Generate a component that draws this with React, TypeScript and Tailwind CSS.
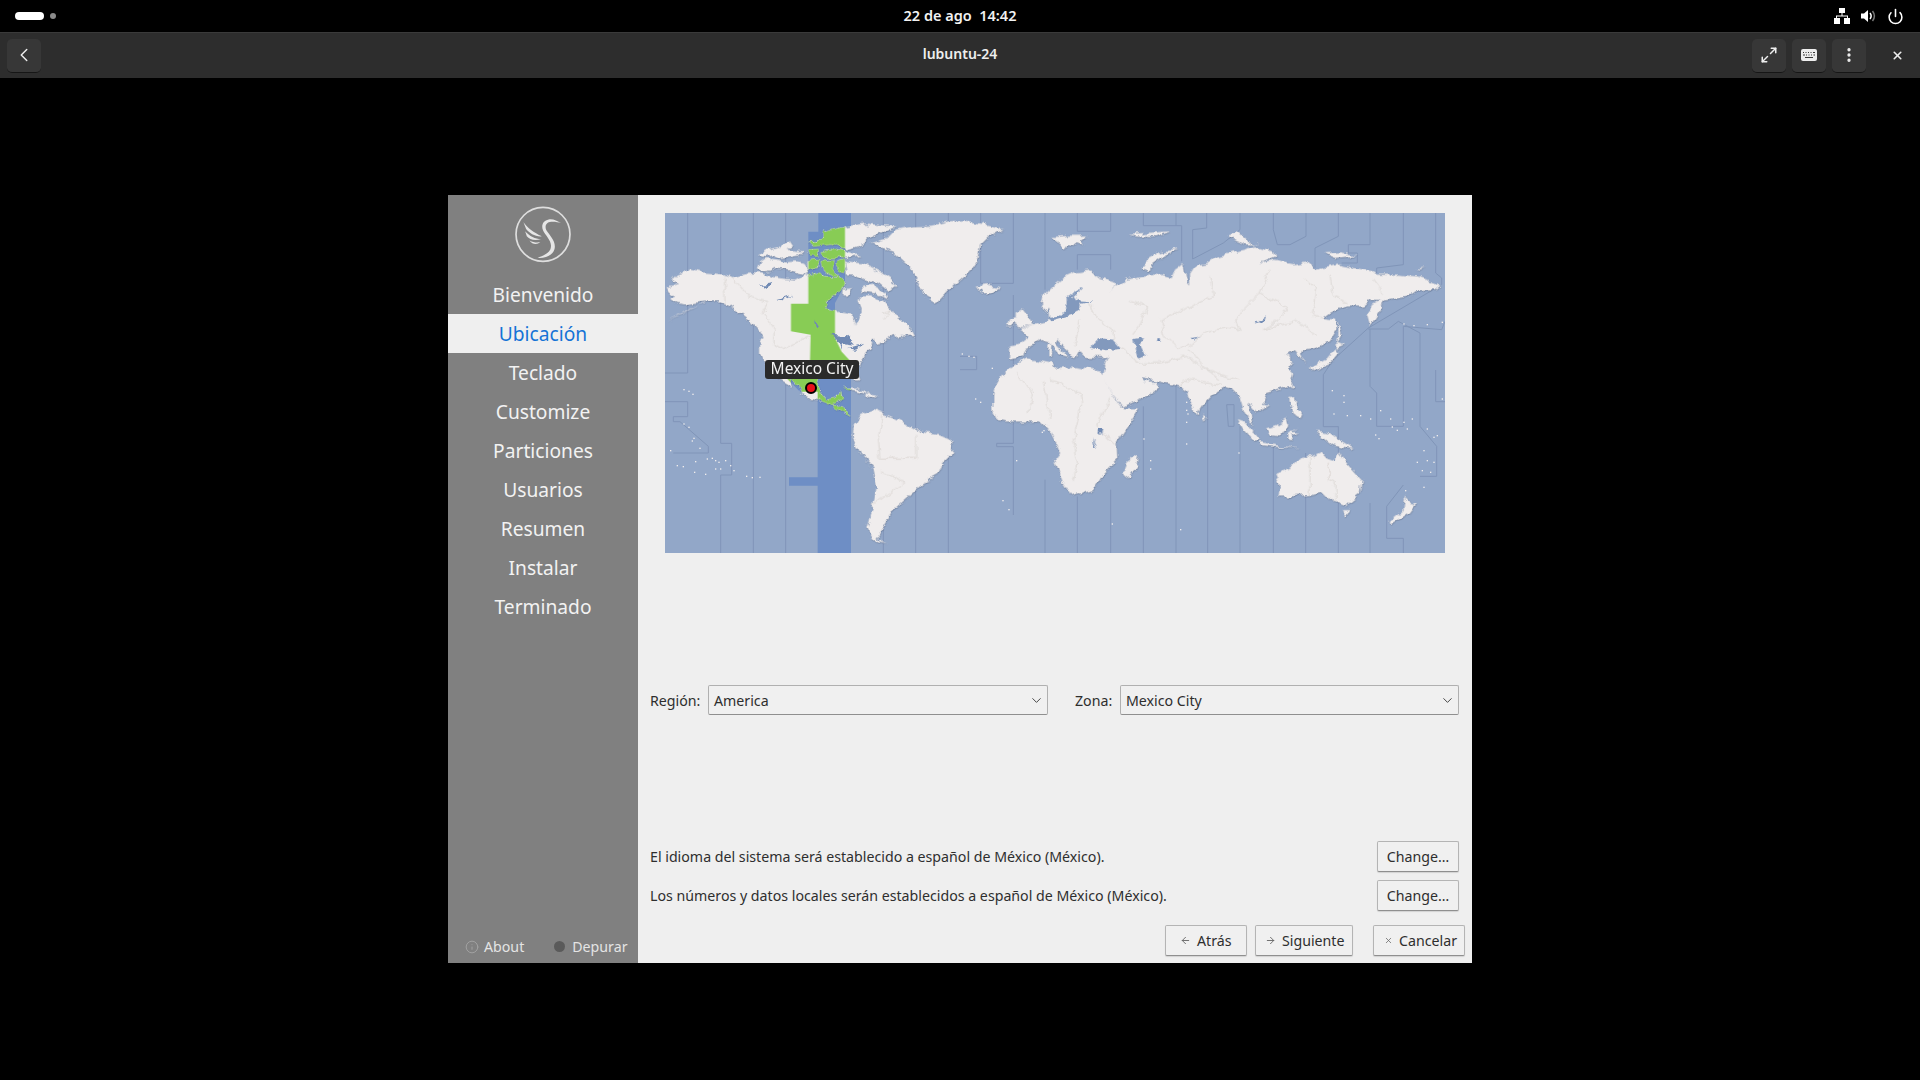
import React from "react";
import { ChevronLeft, ChevronDown, Maximize2, EllipsisVertical, X, Power, Info, ArrowLeft, ArrowRight } from "lucide-react";

const font = "font-['Noto_Sans','Liberation_Sans',sans-serif]";

// map outlines are traced from crops: 3 units = 1 screen pixel, origin at the map's top left
const AMERICAS = [
  "5,322 40,308 80,290 110,272 130,265 100,268 60,275 30,268 15,258 30,250 10,235 5,222 40,212 20,200 35,185 75,170 110,178 170,183 205,192 250,182 290,180 305,185 340,195 390,200 420,185 440,195 455,185 480,190 520,190 540,210 530,235 510,245 485,265 480,285 510,295 560,305 575,325 565,338 582,320 590,290 580,265 585,250 620,250 660,265 680,290 700,315 735,340 750,370 720,368 690,362 660,385 640,390 625,380 620,400 600,425 590,445 583,446 575,471 583,506 570,506 563,481 540,466 505,481 465,491 457,516 467,541 485,561 515,554 525,531 530,556 505,576 530,581 560,604 545,601 510,581 475,566 435,561 410,546 395,506 370,488 385,525 340,500 300,450 285,420 285,395 295,370 280,350 250,320 225,300 205,285 190,275 160,265 130,265",
  "275,165 285,145 300,135 340,140 360,148 395,145 420,150 430,165 425,185 395,180 370,172 330,165 310,175 285,172",
  "285,125 310,108 345,100 375,85 385,100 365,110 415,115 405,125 345,135 320,125 300,130",
  "470,60 540,40 600,32 695,40 650,60 625,70 590,95 545,110 500,95 470,85",
  "430,85 480,85 500,95 445,100",
  "430,110 460,108 460,130 435,130",
  "470,115 510,110 590,125 540,135 480,135",
  "430,145 465,140 460,165 430,165",
  "470,145 505,140 500,170 525,190 480,180",
  "510,150 540,140 540,180 525,175",
  "440,185 470,188 460,200",
  "540,145 590,150 640,175 695,215 670,235 640,210 600,200 570,185 545,185",
  "535,230 560,225 555,245 535,245",
  "585,225 620,215 660,240 670,260 630,240 590,235",
  "620,90 670,75 695,50 745,40 800,38 850,25 900,22 1015,46 975,71 945,101 935,146 915,176 865,216 815,271 775,246 755,196 730,156 685,116 635,101",
  "935,221 970,216 1005,226 980,241 950,241",
  // south america and the caribbean
  "565,646 585,606 625,588 655,601 705,621 765,656 820,666 865,686 860,721 835,746 820,786 775,811 725,856 685,891 665,926 635,976 665,991 625,981 607,946 625,876 635,816 625,766 585,721 563,676",
  "535,524 575,524 625,546 585,536",
  "600,544 635,548 625,556 603,554",
  "685,354 720,371 697,374",
];

const EURASIA = [
  "-90,396 -60,392 -35,372 -60,348 -15,335 15,325 30,315 28,290 20,300 5,270 10,250 40,220 70,195 110,178 150,172 180,195 235,212 205,235 240,210 255,200 285,195 350,185 395,195 405,170 430,150 440,200 450,215 450,185 470,155 500,150 530,130 590,115 650,100 700,115 705,130 655,150 700,140 760,150 800,145 830,170 890,155 1000,175 1010,185 1075,185 1130,190 1205,215 1185,232 1130,235 1110,250 1040,262 990,260 970,278 915,278 870,300 850,315 885,320 890,350 870,385 830,405 790,410 780,430 800,450 785,440 765,415 735,425 760,445 750,470 760,481 750,521 680,541 670,571 690,576 650,601 625,571 640,641 612,596 600,551 580,531 555,526 515,546 500,561 470,606 440,536 420,521 360,506 335,501 300,496 285,481 310,506 345,506 355,526 320,551 250,581 215,541 185,486 200,438 205,432 135,432 118,415 105,440 88,418 50,380 45,390 85,432 60,425 25,385 0,378 -30,395 -50,430 -90,437",
  "-140,546 -135,516 -115,486 -90,464 -40,436 35,451 40,466 100,461 180,476 190,491 215,541 250,586 300,586 265,641 230,691 232,736 190,781 160,831 95,851 70,811 60,781 45,741 60,721 50,696 30,656 0,626 -40,626 -100,626 -125,621 -140,590",
  "-95,321 -70,311 -70,296 -55,286 -25,321 -20,336 -60,346",
  "-95,325 -80,320 -85,340 -98,340",
  "40,72 85,68 145,68 120,85 125,100 90,90 75,110 55,95",
  "265,62 310,60 390,55 350,70 290,68",
  "305,165 320,140 360,118 415,108 370,130 335,155 330,175",
  "560,65 590,55 625,85 655,95 620,95 590,85",
  "855,120 905,118 950,128 890,135",
  "1130,170 1155,167 1140,173",
  "1035,252 1025,285 990,340 980,305 1000,275",
  "895,320 905,365 890,390 895,360",
  "812,465 860,440 890,405 895,420 870,450 820,472",
  "890,385 912,395 890,405",
  "25,395 35,395 32,430 25,430",
  // south east asia, oceania, indian ocean: crop C is 471 lower
  "295,721 290,761 265,796 250,786 258,746",
  "490,601 500,616 488,618",
  "590,621 620,631 660,681 640,683 605,646",
  "655,686 720,699 780,706 720,703 660,696",
  "678,646 710,636 740,616 745,636 722,671 690,666",
  "745,661 770,641 755,656 775,661 755,666 760,681 745,681",
  "750,556 765,551 770,586 790,606 785,619 760,601",
  "825,656 870,661 905,686 945,709 900,703 875,696 850,676",
  "705,781 755,761 785,731 815,733 845,719 860,736 885,746 895,716 925,756 965,801 960,841 915,879 880,866 850,836 810,846 745,851 715,851 720,821",
  "908,891 932,891 920,909",
  "1095,851 1110,866 1128,871 1110,896 1080,916 1055,931 1052,921 1090,891",
  "755,511 760,523 750,523",
];

// inner seas and lakes, painted on top of the land
const SEAS_EA = [
  "130,222 105,235 80,255 80,285 50,312 25,315 35,325 90,310 125,285 120,272 165,268 110,265 100,250",
  "150,405 175,375 215,380 240,408 200,412",
  "280,378 315,372 300,395 318,430 295,440 285,410",
];
const LAKES_AM = [
  "285,215 325,210 300,225",
  "335,262 380,248 350,265",
  "450,320 465,345 455,345",
  "500,365 545,370 570,395 530,390",
  "550,405 595,392 570,410",
  "525,385 535,385 530,410",
];
const LAKES_EA = [
  "645,335 680,308 670,328",
  "447,378 482,373 450,382",
  "350,378 360,380 358,390 348,388",
  "175,650 190,650 185,665 173,663",
  "158,675 172,705 165,705",
];

const ZONE = "460,0 558,0 558,40 540,40 540,215 510,270 510,375 530,416 558,446 558,1020 458,1020 458,818 372,818 372,793 458,793 458,536 405,536 365,496 435,446 437,365 378,355 378,272 430,272 430,56 460,56";

const TZ_AMERICAS = [
  "68,0 68,480 0,480", "0,566 68,566 68,611 25,611 25,626 45,626 130,700 130,720 25,720", "167,0 167,691 200,691 200,786 167,786 167,1020",
  "265,0 265,1020", "362,0 362,1020", "655,0 655,1020", "752,0 752,1020", "850,0 850,1020",
  "947,0 947,211 1045,211 1045,0", "1045,246 1045,691 995,691 995,701 1045,701 1045,906",
  "885,430 935,430 935,470 885,470",
];
const TZ_EURASIA = [
  "15,0 15,230", "15,800 15,1020", "112,0 112,55 212,55 212,0", "112,125 212,125 212,170", "112,125 112,170",
  "112,850 112,1020", "212,830 212,1020", "310,0 310,38 408,38 408,0", "408,38 425,38 425,145",
  "458,138 458,50 500,45 500,0", "458,138 550,90 600,50 600,0", "700,0 700,50 712,95 750,95 798,70 798,0",
  "895,0 895,70 825,105 825,165", "925,95 990,95 990,0", "925,95 925,120 952,120 952,150 905,150",
  "1090,0 1090,155 1010,165 1010,180", "1187,0 1187,180 1205,195 1205,215",
  "1205,215 985,345 880,440 850,485 850,641 895,641", "1075,325 1045,348 985,348", "1075,325 1140,360 1140,640 1190,700 1190,790 1140,790", "1215,325 1205,350 1090,340 1090,640 1010,640",
  "990,348 990,520 1010,540 1010,640", "310,580 310,1020", "408,510 408,1020", "503,560 503,1020", "600,640 600,1020", "700,690 700,1020", "797,720 797,1020", "895,640 895,1020", "990,870 990,1020",
  "1090,816 1040,880 1040,976 1090,976 1090,1020", "560,575 582,575 582,640 565,640 560,575", "1187,471 1187,566 1215,566",
];

const BORDERS_AM = [
  "178,190 180,270", "205,195 250,250 310,270 295,300 330,345 330,395 355,410 437,365", "655,300 680,290 655,320",
  "655,601 640,676 645,736 755,736 755,666", "645,776 720,806 625,876",
];
const BORDERS_EA = [
  "120,320 105,400", "145,265 175,320 225,355 225,375 190,395 255,410", "270,265 320,280 300,330 275,365",
  "360,320 430,290 520,250 510,190", "360,320 375,370 415,410 450,395 500,355 555,345 600,350 590,320 610,290 660,240 690,170",
  "660,240 740,280 720,320 670,350 770,325 800,345 830,370", "795,195 830,230 820,310 850,315", "870,185 880,250 920,270",
  "1000,200 1030,240", "450,410 500,470 590,500", "255,410 290,450 360,450 440,430 540,500", "545,516 430,501 420,521",
  "30,501 120,541 125,571 100,681 115,751 100,801", "210,556 170,641 230,701", "-70,480 -20,545 -40,600", "10,500 30,620",
  "810,736 810,841", "865,746 865,799 885,806 885,866",
];

// small islands, same units
const DOTS = [
  [55,528],[70,533],[82,542],[55,631],[70,641],[85,674],[80,682],[103,704],[15,711],[90,744],[35,756],[53,759],[87,776],[125,736],[140,734],[150,741],[160,746],[180,741],[195,756],[165,766],[150,766],[205,771],[243,788],[260,792],[283,791],[120,782],[890,421],[910,428],[925,431],[980,464],[930,556],[945,566],[1012,861],[1030,888],[1053,741],[1130,656],[1135,651],
  [1455,741],[1435,676],[1563,590],[1563,566],[1563,626],[1567,601],[1563,691],[1720,718],[1455,766],[1340,931],[1545,948],
  [2000,531],[2035,546],[2035,566],[2005,601],[2045,606],[2085,606],[2115,616],[2145,591],[2175,616],[2215,626],[2240,616],[2225,646],[2285,646],[2305,671],[2315,666],[2275,711],[2255,746],[2285,741],[2305,746],[2270,771],[2295,776],[2220,831],[2275,821],[2215,331],[2245,336],[2285,333],[2330,326],[2330,556],[2180,640],[2195,650],[2130,664],[2140,675],
];

function WorldMap() {
  return (
    <svg viewBox="0 0 2340 1020" className="block w-[780px] h-[340px]">
      <defs>
        <clipPath id="zone-clip">
          <polygon points={ZONE} />
        </clipPath>
        {/* roughens the straight traced edges into coastlines */}
        <filter id="rough" filterUnits="userSpaceOnUse" x="-20" y="-20" width="2380" height="1060">
          <feTurbulence type="fractalNoise" baseFrequency="0.035" numOctaves="4" seed="7" />
          <feDisplacementMap in="SourceGraphic" scale="22" xChannelSelector="R" yChannelSelector="G" />
        </filter>
      </defs>
      <rect width="2340" height="1020" fill="#92a7c8" />
      <polygon points={ZONE} fill="#6e8ec5" />
      <g fill="none" stroke="#8095b8" strokeWidth="3">
        {TZ_AMERICAS.map((p, i) => (
          <polyline key={i} points={p} />
        ))}
        <g transform="translate(1125 0)">
          {TZ_EURASIA.map((p, i) => (
            <polyline key={i} points={p} />
          ))}
        </g>
      </g>
      <g className="drop-shadow-[1px_2px_2px_rgba(40,50,70,0.35)]">
        <g filter="url(#rough)" fill="#f0eded">
          {AMERICAS.map((p, i) => (
            <polygon key={i} points={p} />
          ))}
          <g transform="translate(1125 0)">
            {EURASIA.map((p, i) => (
              <polygon key={i} points={p} />
            ))}
          </g>
        </g>
      </g>
      <g filter="url(#rough)" fill="none" stroke="#dcd8d5" strokeWidth="3">
        {BORDERS_AM.map((p, i) => (
          <polyline key={i} points={p} />
        ))}
        <g transform="translate(1125 0)">
          {BORDERS_EA.map((p, i) => (
            <polyline key={i} points={p} />
          ))}
        </g>
      </g>
      <g clipPath="url(#zone-clip)">
        <g filter="url(#rough)" fill="#88cc55">
          {AMERICAS.map((p, i) => (
            <polygon key={i} points={p} />
          ))}
        </g>
      </g>
      <g filter="url(#rough)" fill="#6f89b3">
        {LAKES_AM.map((p, i) => (
          <polygon key={i} points={p} />
        ))}
        <g transform="translate(1125 0)">
          {LAKES_EA.map((p, i) => (
            <polygon key={i} points={p} />
          ))}
          {SEAS_EA.map((p, i) => (
            <polygon key={i} points={p} fill="#8299bd" />
          ))}
        </g>
      </g>
      {DOTS.map(([x, y], i) => (
        <rect key={i} x={x} y={y} width="4" height="4" fill="#f0eded" />
      ))}
    </svg>
  );
}

// lubuntu bird, traced from the crop
function BirdLogo() {
  return (
    <svg viewBox="222 50 172 172" className="w-[58px] h-[58px]" fill="#e6e6e6">
      <circle cx="308" cy="134" r="80" fill="none" stroke="#dedede" strokeWidth="5" />
      <path d="M362 101C350 94 338 88 325 90C308 93 302 108 308 122C316 140 338 155 330 178C324 192 305 198 292 204C312 206 336 198 342 178C348 155 328 138 318 122C312 110 318 98 332 97C342 96 352 98 362 101Z" />
      <path d="M250 98C262 115 280 128 305 140C285 142 268 130 258 118Z" />
      <path d="M255 125C268 140 285 148 302 148C285 154 268 150 260 140Z" />
      <path d="M268 152C280 158 290 160 300 157C290 166 276 164 268 152Z" />
    </svg>
  );
}

function NetworkIcon() {
  return (
    <svg viewBox="0 0 16 16" className="w-4 h-4" fill="#fff">
      <rect x="5" y="0" width="6" height="5" />
      <rect x="0" y="10" width="6" height="6" />
      <rect x="10" y="10" width="6" height="6" />
      <path d="M7.5 5h1v2.500H14V10h-1V8.500H3V10H2V7.500h5.500z" />
    </svg>
  );
}

function SpeakerIcon() {
  return (
    <svg viewBox="0 0 17 16" className="w-[17px] h-4" fill="none">
      <path d="M1 5.500h3L8 2v12l-4-3.500H1z" fill="#fff" />
      <path d="M10 5c1.300 1.700 1.300 4.300 0 6" stroke="#fff" strokeWidth="1.500" />
      <path d="M12.500 3c2.300 3 2.300 7 0 10" stroke="#777777" strokeWidth="1.500" />
    </svg>
  );
}

function KeyboardIcon() {
  return (
    <svg viewBox="0 0 16 12" className="w-4 h-3" fill="#eeeeee">
      <path fillRule="evenodd" d="M2 0h12a2 2 0 0 1 2 2v8a2 2 0 0 1-2 2H2a2 2 0 0 1-2-2V2a2 2 0 0 1 2-2zM2 3v1h1V3zM4.500 3v1h1V3zM7 3v1h1V3zM9.500 3v1h1V3zM12 3v1h2V3zM2 5.500v1h2v-1zM5 5.500v1h1v-1zM7.500 5.500v1h1v-1zM10 5.500v1h1v-1zM12.500 5.500v1h1.500v-1zM4 8v1h8V8z" />
    </svg>
  );
}

function HeaderButton({ children }: { children: React.ReactNode }) {
  return (
    <div className="w-[34px] h-[34px] rounded-[5px] bg-[#373737] border-b border-[#161616] flex items-center justify-center text-[#eeeeee]">
      {children}
    </div>
  );
}

function PushButton({ className, children }: { className: string; children: React.ReactNode }) {
  return (
    <div className={"h-[31px] rounded-[2px] border border-[#b4b4b4] border-b-[#8f8f8f] bg-[#f0f0f0] flex items-center text-[14.2px] text-[#2e2e2e] shadow-[0_1px_1px_rgba(0,0,0,0.12)] " + className}>
      {children}
    </div>
  );
}

function Combo({ value, className }: { value: string; className: string }) {
  return (
    <div className={"h-[30px] rounded-[2px] border border-[#b0b0b0] border-b-[#8f8f8f] bg-[#f0f0f0] flex items-center justify-between pl-[5px] pr-[3px] text-[14.2px] text-[#2e2e2e] " + className}>
      <span className="pt-px">{value}</span>
      <ChevronDown size={15} strokeWidth={1.4} />
    </div>
  );
}

const steps = ["Bienvenido", "Ubicación", "Teclado", "Customize", "Particiones", "Usuarios", "Resumen", "Instalar", "Terminado"];

export default function App() {
  return (
    <div className={"h-screen w-full bg-black flex flex-col overflow-hidden " + font}>
      {/* gnome top bar */}
      <div className="h-8 shrink-0 relative flex items-center justify-between pl-[15px] pr-[16px]">
        <div className="flex items-center gap-[6px]">
          <div className="w-[29px] h-2 rounded-full bg-white" />
          <div className="w-[6px] h-[6px] rounded-full bg-[#8a8a8a]" />
        </div>
        <div className="absolute left-0 right-0 top-[5px] text-center text-[14.5px] leading-[20px] font-semibold text-[#f2f2f2] whitespace-pre">22 de ago  14:42</div>
        <div className="flex items-center gap-[10px] text-white">
          <NetworkIcon />
          <SpeakerIcon />
          <Power size={17} strokeWidth={2.2} />
        </div>
      </div>

      {/* boxes header */}
      <div className="h-[46px] shrink-0 bg-[#2d2d2d] border-t border-[#3a3a3a] relative flex items-center justify-between pl-[7px] pr-[16px]">
        <HeaderButton><ChevronLeft size={22} strokeWidth={1.6} /></HeaderButton>
        <div className="absolute left-0 right-0 top-[11px] text-center text-[14px] leading-[20px] font-semibold text-[#eeeeee]">lubuntu-24</div>
        <div className="flex items-center">
          <div className="flex gap-[6px] mr-[25px]">
            <HeaderButton><Maximize2 size={18} strokeWidth={2} /></HeaderButton>
            <HeaderButton><KeyboardIcon /></HeaderButton>
            <HeaderButton><EllipsisVertical size={18} strokeWidth={2.4} /></HeaderButton>
          </div>
          <X size={13} strokeWidth={3} className="text-[#eeeeee]" />
        </div>
      </div>

      {/* installer window */}
      <div className="flex-1 flex items-center justify-center">
        <div className="w-[1024px] h-[768px] flex bg-[#efefef]">
          <div className="w-[190px] bg-[#808080] flex flex-col">
            <div className="h-[80px] flex items-center justify-center">
              <BirdLogo />
            </div>
            {steps.map((s) => (
              <div
                key={s}
                className={
                  "h-[39px] pt-px flex items-center justify-center text-[19.2px] " +
                  (s === "Ubicación" ? "bg-[#efefef] text-[#1573d6]" : "text-[#f2f2f2]")
                }
              >
                {s}
              </div>
            ))}
            <div className="mt-auto h-[34px] flex items-center pl-[17px] pt-px text-[14.2px] text-[#e4e4e4]">
              <Info size={14} strokeWidth={1.5} className="text-[#a6a6a6] mr-[5px]" />
              <span>About</span>
              <div className="w-[11px] h-[11px] rounded-full bg-[#5a5a5a] ml-[30px] mr-[7px]" />
              <span>Depurar</span>
            </div>
          </div>

          <div className="flex-1 flex flex-col pt-[18px]">
            <div className="relative ml-[27px] w-[780px] h-[340px]">
              <WorldMap />
              <div className="absolute left-[100px] top-[147px] w-[94px] h-[19px] pb-[2px] rounded-[3px] bg-[#2a2a2a] flex items-center justify-center text-[15.5px] text-[#f2f2f2]">
                Mexico City
              </div>
              <div className="absolute left-[140px] top-[169px] w-[12px] h-[12px] rounded-full bg-[#e8101a] border-2 border-black" />
            </div>

            <div className="mt-[132px] flex items-center pl-[12px] text-[14.2px] text-[#2e2e2e]">
              <span className="w-[58px] pt-px">Región:</span>
              <Combo value="America" className="w-[340px]" />
              <span className="ml-[27px] w-[45px] pt-px">Zona:</span>
              <Combo value="Mexico City" className="w-[339px]" />
            </div>

            <div className="mt-[126px] flex items-center justify-between pl-[12px] pr-[13px] text-[14.2px] text-[#2e2e2e]">
              <span>El idioma del sistema será establecido a español de México (México).</span>
              <PushButton className="w-[82px] justify-center">Change…</PushButton>
            </div>
            <div className="mt-[8px] flex items-center justify-between pl-[12px] pr-[13px] text-[14.2px] text-[#2e2e2e]">
              <span>Los números y datos locales serán establecidos a español de México (México).</span>
              <PushButton className="w-[82px] justify-center">Change…</PushButton>
            </div>

            <div className="mt-[14px] flex justify-end pr-[7px]">
              <PushButton className="w-[82px] pl-[14px] gap-[6px]"><ArrowLeft size={11} className="text-[#666666]" />Atrás</PushButton>
              <PushButton className="w-[98px] ml-[8px] pl-[9px] gap-[6px]"><ArrowRight size={11} className="text-[#666666]" />Siguiente</PushButton>
              <PushButton className="w-[92px] ml-[20px] pl-[10px] gap-[6px]"><X size={9} className="text-[#666666]" />Cancelar</PushButton>
            </div>
          </div>
        </div>
      </div>
    </div>
  );
}
